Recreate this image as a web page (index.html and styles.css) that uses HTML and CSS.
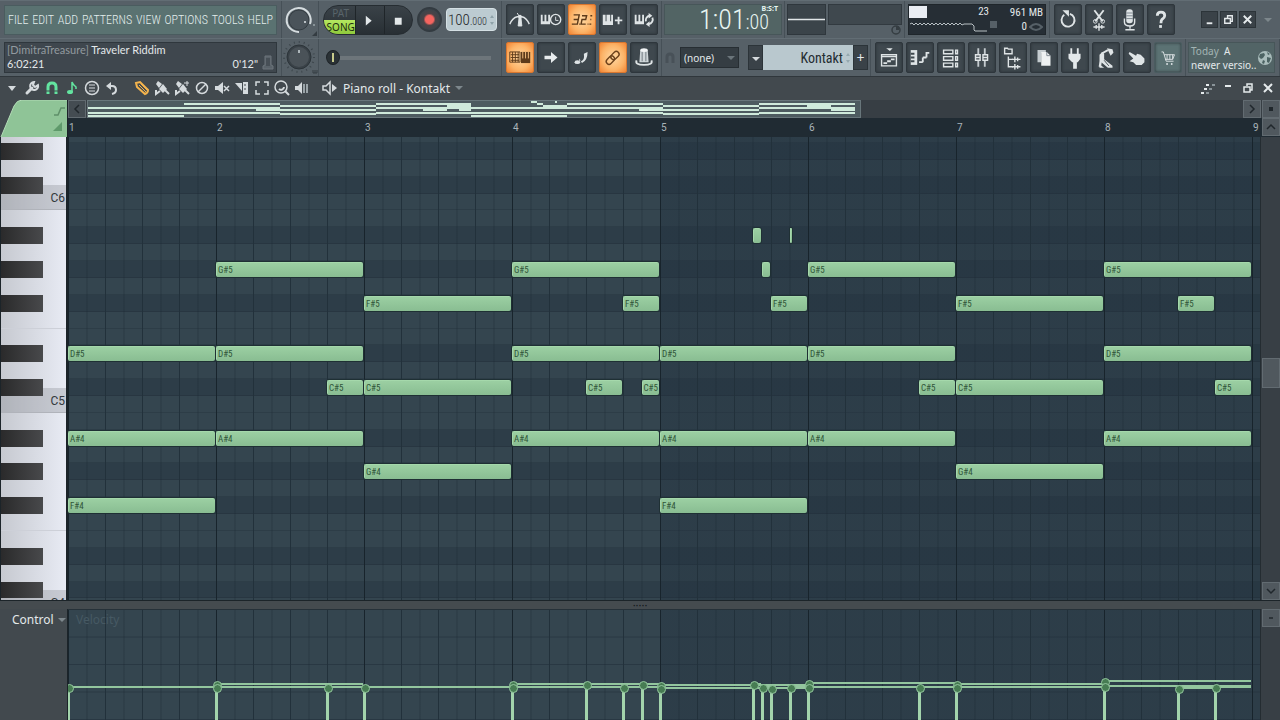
FILE: index.html
```html
<!DOCTYPE html>
<html lang="en">
<head>
  <meta charset="UTF-8" />
  <meta name="viewport" content="width=device-width, initial-scale=1" />
  <title>Piano roll - Kontakt</title>
  <link rel="stylesheet" href="styles.css">
</head>
<body>

  <header class="topbar">

    <!-- First row -->
    <div class="bar-row">
      <div class="cell menu-cell">
        <nav class="menu">
          <a href="#">FILE</a>
          <a href="#">EDIT</a>
          <a href="#">ADD</a>
          <a href="#">PATTERNS</a>
          <a href="#">VIEW</a>
          <a href="#">OPTIONS</a>
          <a href="#">TOOLS</a>
          <a href="#">HELP</a>
        </nav>
      </div>
      <div class="cell knob-cell">
        <button class="knob" aria-label="Main volume">
          <svg viewBox="0 0 36 36">
            <circle cx="17" cy="18" r="10" fill="#4a535a" stroke="#343c42"/>
            <path d="M17 30A12 12 0 1 1 28 22" fill="none" stroke="#d5dcdf" stroke-width="2"/>
            <circle cx="23" cy="20" r="1" fill="#dfe5e8"/><circle cx="32" cy="23" r="1" fill="#9aa4a9"/>
            <path d="M30 34h5v-5z" fill="#343c42"/>
          </svg>
        </button>
      </div>
      <div class="cell transport-cell">
        <div class="transport">
          <div class="mode">
            <button class="pat">PAT</button>
            <button class="song">SONG</button>
          </div>
          <button aria-label="Play"><svg viewBox="0 0 28 30"><path d="M10 10l6 5-6 5z" fill="#e3e8ea"/></svg></button>
          <button aria-label="Stop"><svg viewBox="0 0 28 30"><path d="M10 12h7v7h-7z" fill="#e3e8ea"/></svg></button>
        </div>
        <button class="record" aria-label="Record"></button>
        <button class="tempo"><span>100</span><small>.000</small>
          <svg viewBox="0 0 6 12"><path d="M1 4l2-3 2 3zM1 8l2 3 2-3z" fill="#8fa2a9"/></svg>
        </button>
      </div>
      <div class="cell tools">
        <button class="tool" aria-label="Metronome"><svg viewBox="0 0 28 30"><path d="M3 20q3-7 8-8h5q5 1 8 8" fill="none" stroke="#dfe4e6" stroke-width="1.5"/><path d="M12 22l1-9h2l1 9zM14 13L11 8" fill="#dfe4e6" stroke="#dfe4e6"/><circle cx="14" cy="12" r="2" fill="#dfe4e6"/></svg></button>
        <button class="tool" aria-label="Wait for input"><svg viewBox="0 0 28 30"><path d="M3 10h2v7h2v-7h2v7h2v-7h2v10H3z" fill="#dfe4e6"/><circle cx="19" cy="15" r="5.500" fill="#3f474d" stroke="#dfe4e6" stroke-width="1.500"/><path d="M19 12v4h3" fill="none" stroke="#dfe4e6"/></svg></button>
        <button class="tool lit" aria-label="Countdown"><svg viewBox="0 0 28 30"><path d="M5 10h6l-1 5-1 5H3M5 15h5M14 11h5l-1 4h-4l-1 5h5M23 11h2M23 15h1M22 20h2M11 20h1M20 20h1" fill="none" stroke="#5c3a1a" stroke-width="1.500"/></svg></button>
        <button class="tool" aria-label="Blend recording"><svg viewBox="0 0 28 30"><path d="M3 10h3v7h1v-7h4v7h1v-7h2v11H3z" fill="#dfe4e6"/><path d="M20 12v8M16 16h8" stroke="#dfe4e6" stroke-width="2"/></svg></button>
        <button class="tool" aria-label="Loop recording"><svg viewBox="0 0 28 30"><path d="M4 10h2v7h2v-7h2v7h2v-7h2v10H4z" fill="#dfe4e6"/><path d="M16 17a5 5 0 0 1 4-6M23 13a5 5 0 0 1-4 7" fill="none" stroke="#dfe4e6" stroke-width="2"/><path d="M19 8l4 3-4 3zM20 17l-4 3 4 3z" fill="#dfe4e6"/></svg></button>
      </div>
      <div class="cell clock-cell">
        <div class="clock"><b>1:01</b><i>:00</i><small>B:S:T</small></div>
      </div>
      <div class="cell scope-cell">
        <div class="scope"><svg viewBox="0 0 39 30" preserveAspectRatio="none"><path d="M0 15h39" stroke="#e2e7e9" stroke-width="1.500"/></svg></div>
        <div class="peaks">
          <div class="peak-box"></div>
          <svg viewBox="0 0 12 10"><circle cx="6" cy="5" r="4" fill="none" stroke="#353d42" stroke-width="1.500"/><path d="M6 5V1h3v4z" fill="#353d42"/></svg>
        </div>
      </div>
      <div class="cell cpu-cell">
        <div class="cpu">
          <div class="cpu-load"><span class="load-bar"></span><span>23</span></div>
          <div class="cpu-mem">961 MB</div>
          <svg class="cpu-graph" viewBox="0 0 80 14" preserveAspectRatio="none"><path d="M1 4l2-1 2 2 2-2 2 2 2-2 2 2 2-2 2 2 2-2 2 2 2-2 2 2 2-2 2 2 2-2 2 2 2-2 2 2 2-2 2 2 2-2 2 2 2-2 2 2 2-2 2 2 2-1h8l2 2v4l1 1h12" fill="none" stroke="#b9c1c5"/></svg>
          <div class="cpu-mem"><span class="poly"></span>0 <svg viewBox="0 0 14 10"><path d="M1 5q6-6 12 0-6 6-12 0z" fill="none" stroke="#566067" stroke-width="2"/></svg></div>
        </div>
      </div>
      <div class="cell tools right-tools">
        <button class="tool" aria-label="Undo history"><svg viewBox="0 0 28 30"><path d="M10 10a7 7 0 1 0 6-1" fill="none" stroke="#dfe4e6" stroke-width="2"/><path d="M8 5h7v7z" fill="#dfe4e6"/></svg></button>
        <button class="tool" aria-label="Cut"><svg viewBox="0 0 28 30"><path d="M9 5l9 12M19 5l-9 12" stroke="#dfe4e6" stroke-width="2"/><circle cx="10" cy="17" r="2" fill="none" stroke="#dfe4e6"/><circle cx="18" cy="17" r="2" fill="none" stroke="#dfe4e6"/><path d="M8 23h12M11 21v4M14 19v8M17 21v4" stroke="#dfe4e6" stroke-width="1.500"/></svg></button>
        <button class="tool" aria-label="Record audio"><svg viewBox="0 0 28 30"><rect x="10" y="4" width="7" height="15" rx="3" fill="#dfe4e6"/><path d="M10 8h7M10 11h7M10 14h7" stroke="#78838a"/><path d="M8 14v4q0 4 6 4 5 0 5-4v-4M14 22v3M9 26h10" fill="none" stroke="#dfe4e6" stroke-width="1.500"/></svg></button>
        <button class="tool" aria-label="Help"><svg viewBox="0 0 28 30"><path d="M10 11q0-4 4-4t4 4q0 2-3 4-1 1-1 4" fill="none" stroke="#dfe4e6" stroke-width="3"/><path d="M12 21h3v3h-3z" fill="#dfe4e6"/></svg></button>
      </div>
      <div class="cell window-cell">
        <button class="win" aria-label="Minimize"><svg viewBox="0 0 16 16"><path d="M5 12h6" stroke="#e5eaec" stroke-width="2"/></svg></button>
        <button class="win" aria-label="Restore"><svg viewBox="0 0 16 16"><path d="M7 6V4h5v6h-2M4 7h6v5H4z" fill="none" stroke="#e5eaec" stroke-width="1.500"/></svg></button>
        <button class="win" aria-label="Close"><svg viewBox="0 0 16 16"><path d="M4 4l8 8M12 4l-8 8" stroke="#e5eaec" stroke-width="2"/></svg></button>
        <span class="arrow dim window-arrow"></span>
      </div>
    </div>

    <!-- Second row -->
    <div class="bar-row">
      <div class="cell menu-cell">
        <div class="hint">
          <div><em>[DimitraTreasure]</em> Traveler Riddim</div>
          <div class="hint-time"><span>6:02:21</span><span>0'12"</span></div>
          <svg viewBox="0 0 14 16"><path d="M4 1h6v9l2 1v3H2v-3l2-1z" fill="#5a636a" stroke="#6c757b"/><path d="M6 3v8M8 3v8" stroke="#343c42"/></svg>
        </div>
      </div>
      <div class="cell knob-cell">
        <button class="knob" aria-label="Main pitch">
          <svg viewBox="0 0 36 36">
            <circle cx="17" cy="17" r="15" fill="none" stroke="#3d464c" stroke-width="2" stroke-dasharray="1 4"/>
            <circle cx="17" cy="17" r="12" fill="#394147" stroke="#2c3439"/>
            <circle cx="17" cy="17" r="10" fill="#4a5258"/>
            <path d="M17 10v3" stroke="#aeb7bb" stroke-width="2"/><path d="M31 30v3h4v-3M33 30v3" fill="none" stroke="#343c42"/>
          </svg>
        </button>
      </div>
      <div class="cell transport-cell">
        <input class="song-pos" type="range" min="0" max="100" value="0" aria-label="Song position">
      </div>
      <div class="cell tools">
        <button class="tool lit" aria-label="Typing keyboard"><svg viewBox="0 0 28 30"><path d="M3 9h11v11H3z" fill="none" stroke="#5c3a1a"/><path d="M4 12h9M4 15h9M4 18h9M6 9v11M9 9v11M12 9v11" stroke="#5c3a1a"/><path d="M15 9h10v12H15z" fill="#5c3a1a"/><path d="M17 9v7M20 9v7M23 9v7" stroke="#fcc684" stroke-width="1"/></svg></button>
        <button class="tool" aria-label="Step edit"><svg viewBox="0 0 28 30"><path d="M7 13h7V9l7 6-7 6v-4H7z" fill="#e8ecee"/></svg></button>
        <button class="tool" aria-label="Slide notes"><svg viewBox="0 0 28 30"><ellipse cx="9" cy="20" rx="3" ry="2" fill="#dfe4e6"/><path d="M11 20v-4l2 3q4-1 3-8l4-2q0 9-6 12l-2-3z" fill="#dfe4e6"/></svg></button>
        <button class="tool lit" aria-label="Multilink controllers"><svg viewBox="0 0 28 30"><g fill="none" stroke="#6d421b" stroke-width="1.500" transform="rotate(-45 14 15)"><rect x="5" y="12" width="10" height="6" rx="3"/><rect x="12" y="12" width="10" height="6" rx="3"/></g></svg></button>
        <button class="tool" aria-label="Magic hat"><svg viewBox="0 0 28 30"><path d="M10 7h8l1 13H9z" fill="#cfd6d9"/><ellipse cx="14" cy="7" rx="4" ry="2" fill="#f2f5f6"/><path d="M12 9v10M16 9v10" stroke="#6c767c"/><path d="M6 18q-2 5 8 5t8-5" fill="none" stroke="#dfe4e6" stroke-width="2"/></svg></button>
      </div>
      <div class="cell snap-cell">
        <svg viewBox="0 0 14 14"><path d="M4 12V6q0-3 3-3t3 3v6" fill="none" stroke="#485158" stroke-width="3"/></svg>
        <select class="snap" aria-label="Snap"><option>(none)</option></select>
      </div>
      <div class="cell channel-cell">
        <button class="side" aria-label="Channel menu"><span class="arrow light"></span></button>
        <button class="channel">Kontakt <svg viewBox="0 0 6 12"><path d="M1 4l2-3 2 3zM1 8l2 3 2-3z" fill="#95a8af"/></svg></button>
        <button class="side plus" aria-label="Add channel">+</button>
      </div>
      <div class="cell tools">
        <button class="tool" aria-label="Playlist"><svg viewBox="0 0 28 30"><path d="M11 5h7l-3 3z" fill="#dfe4e6"/><path d="M6 12h16v12H6zM6 14h16" fill="none" stroke="#dfe4e6" stroke-width="1.500"/><path d="M8 21h4M12 19h4M16 17h4" stroke="#dfe4e6" stroke-width="2"/></svg></button>
        <button class="tool" aria-label="Piano roll"><svg viewBox="0 0 28 30"><path d="M4 7h7v16H4z" fill="#dfe4e6"/><path d="M4 11h4M4 15h4M4 19h4" stroke="#3f484e" stroke-width="2"/><path d="M13 20h4M17 15h4M20 10h4M17 20v-5M21 15v-5" stroke="#dfe4e6" stroke-width="2"/></svg></button>
        <button class="tool" aria-label="Channel rack"><svg viewBox="0 0 28 30"><path d="M6 7h10v4H6zM6 14h10v4H6zM6 21h10v4H6zM19 7h2v4h-2zM19 14h2v4h-2zM19 21h2v4h-2z" fill="none" stroke="#dfe4e6" stroke-width="1.500"/></svg></button>
        <button class="tool" aria-label="Mixer"><svg viewBox="0 0 28 30"><path d="M10 5v7M17 5v7M10 18v7M17 18v7" stroke="#c4cbcf" stroke-width="2"/><path d="M7 12h5v6H7zM15 12h5v6h-5zM7 15h5M15 15h5" fill="none" stroke="#dfe4e6" stroke-width="1.500"/></svg></button>
        <button class="tool" aria-label="Browser"><svg viewBox="0 0 28 30"><path d="M5 5h3l1 1h4v5H5zM9 14v11h5M9 17h5" fill="none" stroke="#dfe4e6" stroke-width="1.500"/><path d="M13 17h9M13 25h9M16 14v6M19 15v4M16 22v6M19 23v4" stroke="#dfe4e6" stroke-width="1.500"/></svg></button>
        <button class="tool" aria-label="Project files"><svg viewBox="0 0 28 30"><path d="M7 7h9v3h-5v10H7z" fill="#c4cbcf"/><path d="M11 9h6l4 4v11H11z" fill="#eef1f2"/><path d="M17 9v4h4" fill="none" stroke="#78838a"/></svg></button>
        <button class="tool" aria-label="Plugins"><svg viewBox="0 0 28 30"><path d="M9 5h2v6h5V5h2v6h2v5l-3 4h-1v7h-4v-7h-1l-4-4v-5h2z" fill="#e3e8ea"/></svg></button>
        <button class="tool" aria-label="Tempo tapper"><svg viewBox="0 0 28 30"><path d="M9 11l7-4M7 25l2-8" fill="none" stroke="#dfe4e6" stroke-width="2"/><path d="M15 5l6 1 1 4-3 3-2-4z" fill="#dfe4e6"/><path d="M7 12l3-3 2 2v6l9 7v2h-5l-7-6v4l3 2H7z" fill="#dfe4e6"/><path d="M12 18l5 6" stroke="#3f484e"/></svg></button>
        <button class="tool" aria-label="Touch"><svg viewBox="0 0 28 30"><path d="M6 9l7 4 1-2 4 1 4 4v4l-3 3h-6l-3-3-4-1 4-3-5-5z" fill="#dfe4e6"/></svg></button>
        <button class="tool shop" aria-label="Content library"><svg viewBox="0 0 28 30"><path d="M7 9h2l3 10h8M10 12h11l-2 5h-8M13 12v5M16 12v5M19 12v5" fill="none" stroke="#dfe4e6"/><circle cx="13" cy="22" r="1" fill="#dfe4e6"/><circle cx="18" cy="22" r="1" fill="#dfe4e6"/></svg></button>
      </div>
      <div class="cell news-cell">
        <a class="news" href="#">
          <span><em>Today</em>&nbsp; A<br>newer versio..</span>
          <svg viewBox="0 0 16 16"><circle cx="8" cy="8" r="7" fill="#a9bcbb"/><path d="M3 4l4-1 1 2-2 3-2 1-2-2zM10 7l4 1-2 5-2-1zM6 10l2 1-1 3-2-1zM10 2l3 2-2 1z" fill="#4c6363"/></svg>
        </a>
      </div>
    </div>
  </header>

  <!-- Piano roll window -->
  <main class="roll">
    <div class="roll-title">
      <button class="mini" aria-label="Menu"><svg viewBox="0 0 16 16"><path d="M4 6h8l-4 5z" fill="#d5dadd"/></svg></button>
      <button class="mini" aria-label="Tools"><svg viewBox="0 0 16 16"><path d="M3 13l5-5" stroke="#d5dadd" stroke-width="3" stroke-linecap="round"/><path d="M14 5a4 4 0 1 1-4-3L9 5l2 2z" fill="none" stroke="#d5dadd" stroke-width="2"/></svg></button>
      <button class="mini" aria-label="Snap to grid"><svg viewBox="0 0 16 16"><path d="M4 14V7q0-4 4-4t4 4v7" fill="none" stroke="#63e4a0" stroke-width="3"/><path d="M2 11h4M10 11h4" stroke="#42494e"/></svg></button>
      <button class="mini" aria-label="Stamp"><svg viewBox="0 0 16 16"><ellipse cx="6" cy="12" rx="3" ry="2" fill="#63e4a0"/><path d="M8 12V2q1 3 4 5v2" fill="none" stroke="#63e4a0" stroke-width="1.500"/></svg></button>
      <button class="mini" aria-label="Options"><svg viewBox="0 0 16 16"><circle cx="8" cy="8" r="6.500" fill="none" stroke="#d5dadd" stroke-width="1.500"/><path d="M5 5h6M5 8h6M5 11h6" stroke="#d5dadd"/></svg></button>
      <button class="mini" aria-label="Undo"><svg viewBox="0 0 16 16"><path d="M5 6h3q4 0 4 4 0 3-4 4" fill="none" stroke="#d5dadd" stroke-width="2"/><path d="M7 2v8L2 6z" fill="#d5dadd"/></svg></button>
      <div class="mini-group">
        <button class="mini" aria-label="Draw"><svg viewBox="0 0 16 16"><path d="M2 3l4-1 8 8q0 3-3 4L3 7z" fill="none" stroke="#f5b44d" stroke-width="2"/><path d="M5 5l7 7M7 4l6 6" stroke="#f5b44d"/></svg></button>
        <button class="mini" aria-label="Paint"><svg viewBox="0 0 16 16"><path d="M2 4l2-3 4 3-3 4z" fill="#d5dadd"/><path d="M5 9l4-5 4 5-4 4z" fill="#d5dadd"/><path d="M11 10l4 4M2 10v4l4-3" fill="none" stroke="#d5dadd" stroke-width="2"/></svg></button>
        <button class="mini" aria-label="Paint sequences"><svg viewBox="0 0 16 16"><path d="M2 4l2-3 4 3-3 4z" fill="#d5dadd"/><path d="M5 9l4-5 4 5-4 4z" fill="#d5dadd"/><path d="M11 10l4 4M2 10v4l4-3" fill="none" stroke="#d5dadd" stroke-width="2"/><path d="M13 1v5M10 3h5" stroke="#d5dadd"/></svg></button>
        <button class="mini" aria-label="Delete"><svg viewBox="0 0 16 16"><circle cx="8" cy="8" r="5.500" fill="none" stroke="#d5dadd" stroke-width="1.500"/><path d="M4 12l8-8" stroke="#d5dadd" stroke-width="1.500"/></svg></button>
        <button class="mini" aria-label="Mute"><svg viewBox="0 0 16 16"><path d="M1 6h3l5-4v12l-5-4H1z" fill="#d5dadd"/><path d="M10 6l5 5M15 6l-5 5" stroke="#d5dadd" stroke-width="1.500"/></svg></button>
        <button class="mini" aria-label="Slice"><svg viewBox="0 0 16 16"><path d="M1 3h7v8zM9 2h5v12H9z" fill="#d5dadd"/><path d="M11 4v2M11 8v2" stroke="#42494e"/></svg></button>
        <button class="mini" aria-label="Select"><svg viewBox="0 0 16 16"><path d="M2 6V2h4M10 2h4v4M14 10v4h-4M6 14H2v-4" fill="none" stroke="#d5dadd" stroke-width="1.500"/></svg></button>
        <button class="mini" aria-label="Zoom"><svg viewBox="0 0 16 16"><circle cx="7" cy="7" r="6" fill="none" stroke="#d5dadd" stroke-width="1.500"/><path d="M10 7a3 3 0 0 1-5 2M11 11l4 4" fill="none" stroke="#d5dadd" stroke-width="2"/></svg></button>
        <button class="mini" aria-label="Playback"><svg viewBox="0 0 16 16"><path d="M1 6h3l4-4v12l-4-4H1z" fill="#d5dadd"/><path d="M10 4v9M13 4v9" stroke="#9aa3a8" stroke-width="2"/></svg></button>
      </div>
      <button class="roll-name">
        <svg viewBox="0 0 16 16"><path d="M1 6h3l4-4v12l-4-4H1z" fill="none" stroke="#d5dadd" stroke-width="1.500"/><path d="M10 4l5 4-5 4z" fill="#d5dadd"/></svg>
        Piano roll - Kontakt <span class="arrow dim"></span>
      </button>
      <div class="roll-win">
        <button class="mini" aria-label="Ghost notes"><svg viewBox="0 0 16 16"><path d="M1 13h3M4 9h3M6 5h3" stroke="#e5eaec" stroke-width="2"/><path d="M6 13h3M9 9h3M12 5h3" stroke="#8a9499" stroke-width="2"/></svg></button>
        <button class="mini" aria-label="Minimize"><svg viewBox="0 0 16 16"><path d="M5 6h6" stroke="#e5eaec" stroke-width="2"/></svg></button>
        <button class="mini" aria-label="Restore"><svg viewBox="0 0 16 16"><path d="M7 6V4h5v6h-2M4 7h6v5H4z" fill="none" stroke="#e5eaec" stroke-width="1.500"/></svg></button>
        <button class="mini" aria-label="Close"><svg viewBox="0 0 16 16"><path d="M4 4l8 8M12 4l-8 8" stroke="#e5eaec" stroke-width="2"/></svg></button>
      </div>
    </div>

    <div class="roll-head">
      <div class="corner"><svg viewBox="0 0 67 37" preserveAspectRatio="none"><path d="M1 37L14 6q3-6 8-6h45v37z" fill="#8fc497"/><path d="M1 37L14 6q3-6 8-6h45" fill="none" stroke="#b3dcb7"/><path d="M54 15h4l3-7h4" fill="none" stroke="#5f8f69" stroke-width="1.500"/><path d="M53 31l9-9v9z" fill="#5f9a6b"/></svg></div>
      <div class="head-main">
        <div class="overview">
          <button class="sq" aria-label="Scroll left"><svg viewBox="0 0 16 16"><path d="M10 4L6 8l4 4" fill="none" stroke="#20272c" stroke-width="1.500"/></svg></button>
          <div class="track"><div class="view"><div class="view-notes" id="overview"></div></div></div>
          <button class="sq" aria-label="Scroll right"><svg viewBox="0 0 16 16"><path d="M6 4l4 4-4 4" fill="none" stroke="#20272c" stroke-width="1.500"/></svg></button>
          <button class="sq" aria-label="Zoom"><svg viewBox="0 0 16 16"><path d="M6 6h4v4H6z" fill="#20272c"/></svg></button>
        </div>
        <div class="ruler-row">
          <div class="ruler"><span>1</span><span>2</span><span>3</span><span>4</span><span>5</span><span>6</span><span>7</span><span>8</span><span class="last">9</span></div>
          <button class="sq" aria-label="Scroll up"><svg viewBox="0 0 16 16"><path d="M4 10l4-4 4 4" fill="none" stroke="#20272c" stroke-width="1.500"/></svg></button>
        </div>
      </div>
    </div>

    <div class="roll-body">
      <div class="keys" id="keys"></div>
      <div class="grid">
        <div class="rows" id="rows"></div>
        <div class="lanes"></div>
        <div class="notes" id="notes"></div>
      </div>
      <div class="vscroll keys-scroll">
        <div class="thumb"></div>
        <button class="sq" aria-label="Scroll down"><svg viewBox="0 0 16 16"><path d="M4 6l4 4 4-4" fill="none" stroke="#20272c" stroke-width="1.500"/></svg></button>
      </div>
    </div>

    <div class="splitter">·····</div>

    <div class="control">
      <div class="control-side"><button class="control-name">Control <span class="arrow dim"></span></button></div>
      <div class="grid control-grid">
        <div class="levels"></div>
        <div class="lanes"></div>
        <span class="lane-name">Velocity</span>
        <div class="notes" id="velocity"></div>
      </div>
      <div class="vscroll"><button class="sq" aria-label="Collapse"><svg viewBox="0 0 16 16"><path d="M6 8h4" stroke="#20272c" stroke-width="1.500"/></svg></button></div>
    </div>
  </main>

  <script src="script.js"></script>
</body>
</html>
```

FILE: styles.css
```css
* {
  box-sizing: border-box;
}

body {
  margin: 0;
  height: 100vh;
  min-width: 1240px;
  display: flex;
  flex-direction: column;
  overflow: hidden;
  background: #42494e;
  color: #e3e8ea;
  font-family: "Noto Sans", "Open Sans", sans-serif;
  font-size: 11px;
}

button,
select,
input {
  font: inherit;
  color: inherit;
  margin: 0;
  padding: 0;
  border: none;
  background: none;
}

button {
  cursor: pointer;
}

a {
  color: inherit;
  text-decoration: none;
}

svg {
  display: block;
}

em,
i {
  font-style: normal;
}

.arrow {
  display: inline-block;
  border: 4px solid transparent;
  border-top-color: #d5dadd;
  border-bottom: none;
}

.arrow.dim {
  border-top-color: #7d878c;
}

/* Top toolbar */
.topbar {
  background: #566067;
  border-bottom: 1px solid #30373c;
}

.bar-row {
  display: flex;
  height: 38px;
  border-top: 1px solid #626d74;
}

.cell {
  display: flex;
  align-items: center;
  flex: none;
  border-right: 1px solid #465057;
}

.menu-cell {
  width: 282px;
  padding: 0 4px;
}

.menu {
  flex: 1;
  height: 30px;
  display: flex;
  align-items: center;
  justify-content: space-between;
  padding: 0 3px;
  background: #5a7271;
  border: 1px solid #4a5c5f;
  font-family: "Roboto Condensed", "Open Sans Condensed", "Open Sans", sans-serif;
  font-size: 12px;
  font-weight: 300;
  color: #e3eeed;
}

.hint {
  flex: 1;
  height: 31px;
  padding: 0 2px;
  position: relative;
  background: #3f474e;
  border: 1px solid #2f373d;
  font-family: Lato, "Noto Sans", sans-serif;
  line-height: 14px;
}

.hint em {
  color: #929a9f;
}

.hint-time {
  display: flex;
  justify-content: space-between;
  padding-right: 16px;
}

.hint svg {
  position: absolute;
  right: 1px;
  bottom: 1px;
  width: 14px;
  height: 16px;
}

.knob-cell {
  width: 37px;
}

.knob,
.knob svg {
  width: 36px;
  height: 36px;
}

.transport-cell {
  width: 183px;
  padding: 0 4px;
  gap: 4px;
}

.transport {
  display: flex;
  height: 30px;
  overflow: hidden;
  border-radius: 15px;
  background: linear-gradient(#3a4248, #282f34);
  border: 1px solid #262d32;
}

.transport > button {
  width: 29px;
  border-left: 1px solid #1f2529;
}

.mode {
  width: 32px;
  display: flex;
  flex-direction: column;
}

.mode button {
  flex: 1;
  line-height: 14px;
  padding-left: 2px;
  font-size: 10px;
}

.mode .pat {
  color: #59646a;
}

.mode .song {
  background: linear-gradient(#b5e860, #8fca3c);
  color: #1d2a10;
}

.record {
  width: 25px;
  height: 25px;
  border-radius: 50%;
  background: radial-gradient(#f4645f 4px, #4a4347 6px, #3c444a 10px);
  border: 2px solid #333b41;
}

.tempo {
  width: 52px;
  height: 23px;
  display: flex;
  align-items: center;
  justify-content: center;
  border-radius: 4px;
  background: #bccbd1;
  border: 1px solid #d5e0e4;
  color: #1d2428;
  font-family: "Roboto Condensed", Roboto, sans-serif;
  font-size: 15px;
  font-weight: 300;
}

.tempo small {
  font-size: 10px;
  padding-top: 3px;
}

.tempo svg,
.channel svg {
  width: 6px;
  height: 12px;
  margin-left: 2px;
}

.song-pos {
  width: 165px;
  height: 16px;
  margin-left: 3px;
  appearance: none;
  background: linear-gradient(#6d757a, #6d757a) center / 100% 4px no-repeat;
}

.song-pos::-webkit-slider-thumb {
  appearance: none;
  width: 14px;
  height: 15px;
  border-radius: 50%;
  background: linear-gradient(#c8cb8c, #c8cb8c) center / 2px 9px no-repeat, #2b3236;
  border: 1px solid #1f2529;
}

.tools {
  gap: 3px;
  padding: 0 3px 0 4px;
}

.tool {
  width: 28px;
  height: 31px;
  border-radius: 2px;
  background: #3f484e;
  border: 1px solid #2e363c;
  box-shadow: inset 0 0 3px #2a3237;
}

.tool svg {
  width: 26px;
  height: 29px;
}

.tool.lit {
  background: radial-gradient(#ffd9a4, #fcb468 60%, #f28433);
  border-color: #d9772f;
  box-shadow: none;
}

.tool.shop {
  background: #5b7273;
  border-color: #4a5c60;
}

.clock-cell {
  width: 123px;
  padding: 0 2px;
}

.clock {
  flex: 1;
  height: 31px;
  display: flex;
  align-items: baseline;
  justify-content: flex-end;
  padding-right: 12px;
  position: relative;
  background: #526464;
  border: 1px solid #475659;
  color: #e8f5f2;
  font-family: "Roboto Condensed", Roboto, sans-serif;
  font-weight: 300;
  line-height: 30px;
}

.clock b {
  font-weight: 300;
  font-size: 28px;
}

.clock i {
  font-size: 20px;
}

.clock small {
  position: absolute;
  top: 0;
  right: 3px;
  font-family: "Noto Sans", sans-serif;
  font-size: 7px;
  line-height: 8px;
  font-weight: bold;
}

.scope-cell {
  width: 120px;
  padding: 0 2px;
  gap: 2px;
}

.scope {
  width: 39px;
  height: 31px;
  background: #3b444a;
  border: 1px solid #2f373d;
}

.scope svg {
  width: 100%;
  height: 100%;
}

.peaks {
  flex: 1;
  height: 31px;
}

.peak-box {
  height: 21px;
  background: #3f484e;
  border: 1px solid #323a40;
}

.peaks svg {
  width: 12px;
  height: 10px;
  margin-left: auto;
}

.cpu-cell {
  width: 145px;
  padding: 0 3px;
}

.cpu {
  flex: 1;
  height: 31px;
  display: grid;
  grid-template-columns: 80px 1fr;
  grid-template-rows: 15px 14px;
  background: #262e35;
  border: 1px solid #1f262b;
  font-family: "Roboto Condensed", Roboto, sans-serif;
  font-size: 11px;
  line-height: 14px;
}

.cpu-load {
  display: flex;
  justify-content: space-between;
}

.load-bar {
  width: 18px;
  height: 12px;
  margin-top: 1px;
  background: #e9edf3;
}

.cpu-mem {
  display: flex;
  justify-content: flex-end;
  align-items: center;
  gap: 2px;
  padding-right: 2px;
}

.cpu-mem svg {
  width: 14px;
  height: 10px;
}

.poly {
  width: 7px;
  height: 7px;
  margin: 0 auto 5px 1px;
  background: #566067;
}

.cpu-graph {
  width: 80px;
  height: 14px;
}

.right-tools {
  border-right: none;
}

.window-cell {
  flex: 1;
  justify-content: flex-end;
  gap: 2px;
  padding-right: 8px;
  border-right: none;
}

.win {
  width: 17px;
  height: 17px;
  background: #3a4248;
  border: 1px solid #2c3439;
}

.win svg {
  width: 15px;
  height: 15px;
}

.window-arrow {
  margin-left: 6px;
}

.snap-cell {
  width: 86px;
  gap: 3px;
  padding-left: 1px;
  border-right: none;
}

.snap-cell svg {
  width: 14px;
  height: 14px;
}

.snap {
  width: 59px;
  height: 21px;
  padding-left: 3px;
  appearance: none;
  background: #353d43;
  border: 1px solid #272e33;
  font-size: 10px;
}

.snap-cell::after {
  content: "";
  margin-left: -15px;
  border: 4px solid transparent;
  border-top-color: #6b757b;
  border-bottom: none;
  pointer-events: none;
}

.channel-cell {
  width: 123px;
}

.side {
  width: 15px;
  height: 25px;
  background: #3a4248;
  border: 1px solid #2c3439;
}

.side .arrow {
  vertical-align: middle;
}

.plus {
  font-size: 14px;
  line-height: 14px;
}

.channel {
  width: 90px;
  height: 25px;
  display: flex;
  align-items: center;
  justify-content: flex-end;
  padding-right: 2px;
  background: #b9c8ce;
  color: #242c31;
  font-family: "Roboto Condensed", Roboto, sans-serif;
  font-size: 14px;
}

.news-cell {
  flex: 1;
  padding: 0 4px 0 2px;
}

.news {
  flex: 1;
  height: 31px;
  display: flex;
  align-items: center;
  justify-content: space-between;
  padding: 0 1px 0 2px;
  background: #526466;
  border: 1px solid #475659;
  font-size: 10px;
  line-height: 14px;
  white-space: nowrap;
}

.news em {
  color: #a3b4b4;
}

.news svg {
  width: 16px;
  height: 16px;
}

/* Piano roll */
.roll {
  flex: 1;
  min-height: 0;
  display: flex;
  flex-direction: column;
}

.roll-title {
  height: 23px;
  flex: none;
  display: flex;
  align-items: center;
  gap: 4px;
  padding: 0 4px 1px;
}

.mini,
.mini svg {
  width: 16px;
  height: 16px;
}

.mini-group,
.roll-win {
  display: flex;
  gap: 4px;
}

.mini-group {
  margin-left: 10px;
}

.roll-name {
  display: flex;
  align-items: center;
  gap: 5px;
  margin-left: 8px;
  font-size: 12px;
}

.roll-name svg {
  width: 16px;
  height: 16px;
}

.roll-win {
  margin-left: auto;
}

.roll-head {
  flex: none;
  display: flex;
  height: 37px;
}

.corner {
  width: 68px;
  flex: none;
  border-right: 1px solid #1c2429;
}

.corner svg {
  width: 100%;
  height: 100%;
}

.head-main {
  flex: 1;
  display: flex;
  flex-direction: column;
}

.overview {
  display: flex;
  gap: 1px;
  height: 19px;
  background: #373e44;
}

.sq {
  width: 18px;
  height: 18px;
  flex: none;
  background: #50585e;
  border: 1px solid #626b71;
}

.overview .sq:first-child {
  background: #444c52;
}

.sq svg {
  width: 16px;
  height: 16px;
}

.track {
  flex: 1;
}

.view {
  width: 67%;
  height: 18px;
  padding: 0 5px 0 0;
  background: #4d5b60;
  border: 1px solid #68767b;
}

.view-notes {
  height: 16px;
  position: relative;
}

.view-notes span {
  position: absolute;
  height: 2px;
  background: #cfeadb;
}

.ruler-row {
  flex: 1;
  display: flex;
  background: #202b33;
}

.ruler {
  flex: 1;
  display: flex;
  padding-right: 8px;
  margin-right: 1px;
  border-bottom: 1px solid #141c22;
  font-family: Roboto, sans-serif;
  font-size: 10px;
  line-height: 19px;
  color: #aab4b9;
}

.ruler span {
  flex: 1;
  padding-left: 1px;
}

.ruler .last {
  flex: none;
  width: 0;
}

.roll-body {
  flex: 1;
  min-height: 0;
  display: flex;
  border-bottom: 1px solid #1c2429;
}

.keys {
  width: 68px;
  flex: none;
  position: relative;
  overflow: hidden;
  background: linear-gradient(to right, #c6c9d0, #e8ebf4);
  border-left: 1px solid #1c2429;
  border-right: 2px solid #1c2429;
}

.keys span {
  position: absolute;
  left: 0;
}

.key-c {
  width: 100%;
  display: flex;
  align-items: flex-end;
  justify-content: flex-end;
  padding: 0 1px 4px 0;
  background: rgba(125, 128, 135, 0.3);
  border-bottom: 1px solid #b0b3ba;
  color: #33383d;
  font-family: Roboto, sans-serif;
  font-size: 12px;
  line-height: 14px;
}

.key-line {
  width: 100%;
  border-bottom: 1px solid #cdd0d8;
}

.key-black {
  width: 42px;
  z-index: 1;
  background: linear-gradient(to right, #2a2a2b, #48494b);
}

.grid {
  flex: 1;
  position: relative;
  overflow: hidden;
  padding-right: 8px;
  display: grid;
  background: #34454f;
}

.rows,
.levels,
.lanes,
.notes {
  grid-area: 1 / 1;
  position: relative;
}

.rows {
  margin-right: -8px;
}

.rows span {
  position: absolute;
  left: 0;
  right: 0;
  border-bottom: 1px solid rgba(20, 32, 42, 0.2);
}

.rows .dark {
  background: rgba(23, 38, 50, 0.25);
}

.levels {
  margin-right: -8px;
  background: linear-gradient(to top, #293843 1px, transparent 1px) 0 0 / 100% 25%;
}

/* bar, beat and half beat lines, darker from bar 5 on */
.lanes {
  background:
    linear-gradient(to right, #18242c 1px, transparent 1px) 0 0 / 12.5% 100%,
    linear-gradient(to right, #22313b 1px, transparent 1px) 0 0 / 3.125% 100%,
    linear-gradient(to right, rgba(26, 39, 49, 0.4) 1px, transparent 1px) 0 0 / 1.5625% 100%,
    linear-gradient(to right, transparent 50%, rgba(31, 46, 60, 0.34) 50%);
  box-shadow: 8px 0 0 rgba(31, 46, 60, 0.34);
}

.notes {
  border-right: 1px solid #18242c;
  margin-right: -1px;
}

.note {
  position: absolute;
  padding-left: 1px;
  background: linear-gradient(#9bcfa2, #89bd92);
  border: 1px solid #a5d8ab;
  border-width: 1px 0 0 1px;
  border-radius: 2px;
  box-shadow: 0 0 0 1px #1f3034;
  color: #2f5538;
  font-family: "Roboto Condensed", "Liberation Sans", sans-serif;
  font-size: 9px;
  line-height: 14px;
  white-space: nowrap;
}

.vscroll {
  width: 20px;
  flex: none;
  display: flex;
  flex-direction: column;
  align-items: center;
  background: #383f45;
  border-left: 1px solid #242c31;
}

/* space above and below the thumb */
.keys-scroll::before {
  content: "";
  flex: 222;
}

.keys-scroll::after {
  content: "";
  flex: 194;
  order: 1;
}

.keys-scroll .sq {
  order: 2;
}

.thumb {
  width: 18px;
  height: 30px;
  background: #50585e;
  border: 1px solid #626b71;
}

.splitter {
  height: 8px;
  flex: none;
  line-height: 7px;
  text-align: center;
  color: #14191c;
  background: #454b4f;
}

.control {
  height: 111px;
  flex: none;
  display: flex;
}

.control-side {
  width: 68px;
  flex: none;
  border-right: 1px solid #1c2429;
}

.control-name {
  display: flex;
  align-items: center;
  gap: 4px;
  padding: 2px 0 0 12px;
  font-size: 12px;
}

.control-grid {
  border-top: 1px solid #263139;
}

.lane-name {
  position: absolute;
  top: 1px;
  left: 8px;
  color: #465963;
  font-size: 12px;
}

.vel {
  position: absolute;
  bottom: 0;
  border-left: 3px solid #a3d4ac;
  border-top: 2px solid #93c69e;
  margin-left: -1px;
}

.vel::before {
  content: "";
  position: absolute;
  top: -4px;
  left: -5px;
  width: 7px;
  height: 7px;
  border-radius: 50%;
  background: #477c53;
  border: 1px solid #93c69e;
}
```

FILE: script.js
```javascript
const names = ['C', 'C#', 'D', 'D#', 'E', 'F', 'F#', 'G', 'G#', 'A', 'A#', 'B'];
const topPitch = 76;      // E6, partly scrolled off
const rowHeight = 3.643;  // percent of the roll height
const scrolled = 0.645;   // part of the top row that is hidden
const bars = 8;

// [pitch, start bar, length in bars]
const notes = [
  [54, 0, 1], [54, 4, 1],
  [56, 2, 1], [56, 6, 1],
  [58, 0, 1], [58, 1, 1], [58, 3, 1], [58, 4, 1], [58, 5, 1], [58, 7, 1],
  [61, 1.75, 0.25], [61, 2, 1], [61, 3.5, 0.25], [61, 3.875, 0.125],
  [61, 5.75, 0.25], [61, 6, 1], [61, 7.75, 0.25],
  [63, 0, 1], [63, 1, 1], [63, 3, 1], [63, 4, 1], [63, 5, 1], [63, 7, 1],
  [66, 2, 1], [66, 3.75, 0.25], [66, 4.75, 0.25], [66, 6, 1], [66, 7.5, 0.25],
  [68, 1, 1], [68, 3, 1], [68, 4.6875, 0.0625], [68, 5, 1], [68, 7, 1],
  [70, 4.625, 0.0625], [70, 4.875, 0.015]
];

// [start bar, length in bars, level in percent]
const velocities = [
  [0, 1, 31], [1, 1, 34], [1, 1, 31], [1.75, 0.25, 31], [2, 1, 31],
  [3, 1, 34], [3, 1, 31], [3.5, 0.5, 34], [3.75, 0.25, 31], [3.875, 0.125, 34],
  [4, 1, 33], [4, 1, 30], [4.625, 0.0625, 34], [4.6875, 0.0625, 31],
  [4.75, 0.25, 30], [4.875, 0.125, 31], [5, 1, 35], [5, 1, 31],
  [5.75, 0.25, 31], [6, 1, 34], [6, 1, 31], [7, 1, 36], [7, 1, 32],
  [7.5, 0.25, 30], [7.75, 0.25, 31]
];

function add(parent, className, style, text) {
  const el = document.createElement('span');
  el.className = className;
  Object.assign(el.style, style);
  if (text) el.textContent = text;
  document.getElementById(parent).appendChild(el);
}

function rowTop(pitch) {
  return (topPitch - pitch - scrolled) * rowHeight;
}

function isBlack(pitch) {
  return names[pitch % 12].includes('#');
}

for (let p = topPitch; p > topPitch - 29; p--) {
  const name = names[p % 12];
  add('rows', isBlack(p) ? 'dark' : '', { top: rowTop(p) + '%', height: rowHeight + '%' });

  if (isBlack(p)) {
    add('keys', 'key-black', { top: rowTop(p) + '%', height: rowHeight + '%' });
  } else if (name === 'C') {
    add('keys', 'key-c', { top: rowTop(p + 0.5) + '%', height: rowHeight * 1.5 + '%' }, 'C' + (p / 12));
  } else if (name === 'F') {
    add('keys', 'key-line', { top: rowTop(p) + '%', height: rowHeight + '%' });
  }
}

notes.forEach(([pitch, start, length]) => {
  const label = length > 0.1 ? names[pitch % 12] + (Math.floor(pitch / 12)) : '';
  add('notes', 'note', {
    left: start / bars * 100 + '%',
    width: `calc(${length / bars * 100}% - 1px)`,
    top: `calc(${rowTop(pitch)}% + 1px)`,
    height: `calc(${rowHeight}% - 2px)`
  }, label);
  add('overview', '', {
    left: start / bars * 100 + '%',
    width: length / bars * 100 + '%',
    top: (70 - pitch) * 5.5 + '%'
  });
});

velocities.forEach(([start, length, level]) => {
  add('velocity', 'vel', {
    left: start / bars * 100 + '%',
    width: length / bars * 100 + '%',
    height: level + '%'
  });
});
```
